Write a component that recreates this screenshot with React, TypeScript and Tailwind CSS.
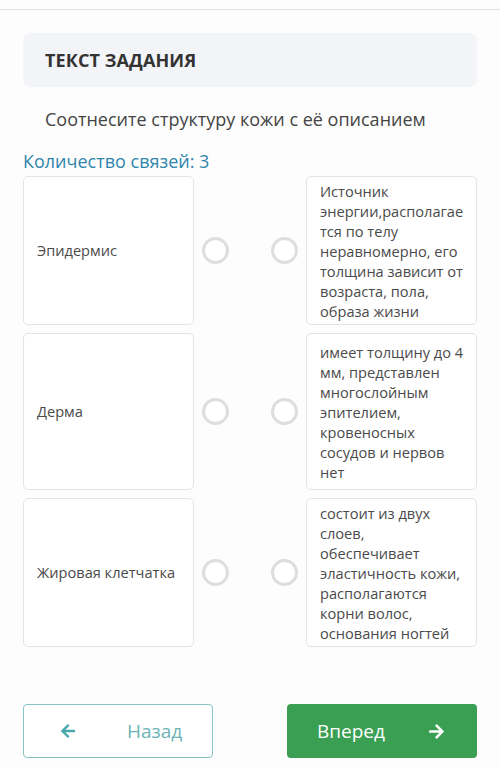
import { FaArrowLeft, FaArrowRight } from "react-icons/fa";

const rows = [
  {
    left: "Эпидермис",
    right: "Источник энергии,располагается по телу неравномерно, его толщина зависит от возраста, пола, образа жизни",
    h: "h-[149px]",
  },
  {
    left: "Дерма",
    right: "имеет толщину до 4 мм, представлен многослойным эпителием, кровеносных сосудов и нервов нет",
    h: "h-[157px]",
  },
  {
    left: "Жировая клетчатка",
    right: "состоит из двух слоев,\nобеспечивает эластичность кожи, располагаются корни волос, основания ногтей",
    h: "h-[149px]",
  },
];

const Dot = () => (
  <div className="h-[27px] w-[27px] rounded-full border-[3px] border-[#dedede] bg-white" />
);

export default function App() {
  return (
    <div
      className="min-h-[768px] w-[500px] bg-[#fdfdfd] text-[#444]"
      style={{ fontFamily: '"Open Sans", "Noto Sans", sans-serif' }}
    >
      <div className="h-[10px] border-b border-[#e2e2e2]" />

      <div className="px-[23px] pt-[23px]">
        {/* заголовок */}
        <div className="flex h-[54px] items-center rounded-lg bg-[#f3f4f7] px-[22px]">
          <h1 className="text-[18px] font-bold tracking-[0.1px] text-[#333]">ТЕКСТ ЗАДАНИЯ</h1>
        </div>

        <p className="mt-[19px] pl-[22px] text-[18px] leading-[26px] text-[#444]">
          Соотнесите структуру кожи с её описанием
        </p>

        <div className="mt-[17px] text-[18px] leading-[24px] text-[#2e86ab]">Количество связей: 3</div>

        {/* связи */}
        <div className="mt-[3px] flex flex-col gap-[8px]">
          {rows.map((r) => (
            <div key={r.left} className={"flex " + r.h}>
              <div className="flex w-[171px] shrink-0 items-center rounded-[5px] border border-[#e4e4e4] bg-white pl-[13px] pr-[2px] text-[14.6px] text-[#4a4a4a]">
                {r.left}
              </div>
              <div className="flex flex-1 items-center justify-between px-[8px]">
                <Dot />
                <Dot />
              </div>
              <div className="flex w-[171px] shrink-0 items-center rounded-[5px] border border-[#e4e4e4] bg-white pl-[13px] pr-[7px] text-[14.6px] leading-[20px] text-[#4a4a4a] break-words">
                <span className="w-full whitespace-pre-line">{r.right}</span>
              </div>
            </div>
          ))}
        </div>

        {/* кнопки */}
        <div className="mt-[57px] flex justify-between">
          <button className="flex h-[54px] w-[190px] items-center rounded-[4px] border-[1.5px] border-[#86c3c4] bg-white pl-[36px] text-[19px] text-[#6db4b7]">
            <FaArrowLeft className="h-[16px] w-[16px] text-[#4aa8ac]" />
            <span className="ml-[51px]">Назад</span>
          </button>
          <button className="flex h-[54px] w-[190px] items-center justify-between rounded-[4px] bg-[#3a9f52] pl-[30px] pr-[32px] text-[19px] text-white">
            <span>Вперед</span>
            <FaArrowRight className="h-[17px] w-[17px]" />
          </button>
        </div>
      </div>
    </div>
  );
}
